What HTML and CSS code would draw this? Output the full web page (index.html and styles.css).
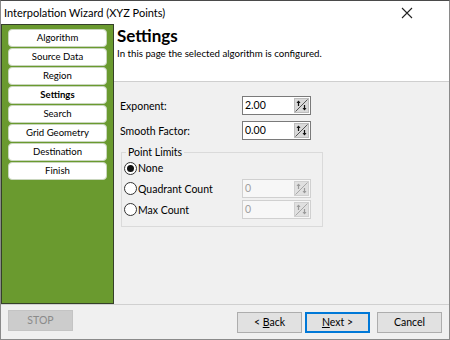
FILE: index.html
```html
<!DOCTYPE html>
<html>
<head>
<meta charset="utf-8">
<link rel="stylesheet" href="styles.css">
</head>
<body>
<div class="window">
  <div class="titlebar">
    <span class="title">Interpolation Wizard (XYZ Points)</span>
    <svg class="close" width="12" height="12" viewBox="0 0 12 12"><path d="M1 1 L11 11 M11 1 L1 11" stroke="#222" stroke-width="1.1"/></svg>
  </div>
  <div class="main">
    <div class="sidebar">
      <div class="navbtn">Algorithm</div>
      <div class="navbtn">Source Data</div>
      <div class="navbtn">Region</div>
      <div class="navbtn active">Settings</div>
      <div class="navbtn">Search</div>
      <div class="navbtn">Grid Geometry</div>
      <div class="navbtn">Destination</div>
      <div class="navbtn">Finish</div>
    </div>
    <div class="content">
      <div class="header">
        <div class="h-title">Settings</div>
        <div class="h-sub">In this page the selected algorithm is configured.</div>
      </div>
      <div class="body">
        <div class="row">
          <span class="lbl">Exponent:</span>
          <div class="spin"><span class="val">2.00</span><svg class="spinbtn" width="15" height="15" viewBox="0 0 15 15"><rect x="0.5" y="0.5" width="14" height="14" fill="#d9d9d9" stroke="#bdbdbd"/><path d="M1.5 13.5 L13.5 1.5" stroke="#555" stroke-width="1"/><path d="M4.5 3 V8" stroke="#111" stroke-width="1.2"/><path d="M2.5 5 L4.5 2.5 L6.5 5 Z" fill="#111"/><path d="M10.5 7 V12" stroke="#111" stroke-width="1.2"/><path d="M8.5 10 L10.5 12.5 L12.5 10 Z" fill="#111"/></svg></div>
        </div>
        <div class="row">
          <span class="lbl">Smooth Factor:</span>
          <div class="spin"><span class="val">0.00</span><svg class="spinbtn" width="15" height="15" viewBox="0 0 15 15"><rect x="0.5" y="0.5" width="14" height="14" fill="#d9d9d9" stroke="#bdbdbd"/><path d="M1.5 13.5 L13.5 1.5" stroke="#555" stroke-width="1"/><path d="M4.5 3 V8" stroke="#111" stroke-width="1.2"/><path d="M2.5 5 L4.5 2.5 L6.5 5 Z" fill="#111"/><path d="M10.5 7 V12" stroke="#111" stroke-width="1.2"/><path d="M8.5 10 L10.5 12.5 L12.5 10 Z" fill="#111"/></svg></div>
        </div>
        <fieldset class="group">
          <legend>Point Limits</legend>
          <div class="radiorow"><span class="radio checked"></span><span>None</span></div>
          <div class="radiorow r2">
            <div class="ropt"><span class="radio"></span><span>Quadrant Count</span></div>
            <div class="spin disabled"><span class="val">0</span><svg class="spinbtn" width="15" height="15" viewBox="0 0 15 15"><rect x="0.5" y="0.5" width="14" height="14" fill="#e0e0e0" stroke="#d0d0d0"/><path d="M1.5 13.5 L13.5 1.5" stroke="#a8a8a8" stroke-width="1"/><path d="M4.5 3 V8" stroke="#9a9a9a" stroke-width="1.2"/><path d="M2.5 5 L4.5 2.5 L6.5 5 Z" fill="#9a9a9a"/><path d="M10.5 7 V12" stroke="#9a9a9a" stroke-width="1.2"/><path d="M8.5 10 L10.5 12.5 L12.5 10 Z" fill="#9a9a9a"/></svg></div>
          </div>
          <div class="radiorow r2">
            <div class="ropt"><span class="radio"></span><span>Max Count</span></div>
            <div class="spin disabled"><span class="val">0</span><svg class="spinbtn" width="15" height="15" viewBox="0 0 15 15"><rect x="0.5" y="0.5" width="14" height="14" fill="#e0e0e0" stroke="#d0d0d0"/><path d="M1.5 13.5 L13.5 1.5" stroke="#a8a8a8" stroke-width="1"/><path d="M4.5 3 V8" stroke="#9a9a9a" stroke-width="1.2"/><path d="M2.5 5 L4.5 2.5 L6.5 5 Z" fill="#9a9a9a"/><path d="M10.5 7 V12" stroke="#9a9a9a" stroke-width="1.2"/><path d="M8.5 10 L10.5 12.5 L12.5 10 Z" fill="#9a9a9a"/></svg></div>
          </div>
        </fieldset>
      </div>
    </div>
  </div>
  <div class="footer">
    <div class="btn stop">STOP</div>
    <div class="spacer"></div>
    <div class="btn">&lt; <u>B</u>ack</div>
    <div class="btn default"><u>N</u>ext &gt;</div>
    <div class="btn cancel">Cancel</div>
  </div>
</div>
</body>
</html>
```

FILE: styles.css
```css
* { box-sizing: border-box; }
html, body { margin: 0; padding: 0; background: #fff; }
body { font-family: Lato, "Liberation Sans", sans-serif; font-size: 10.5px; color: #000; }

.window {
  width: 450px; height: 340px;
  border: 1px solid #8a8a8a;
  border-top-color: #4a4a4a;
  display: flex; flex-direction: column;
  background: #f0f0f0;
}
.titlebar {
  height: 23px; background: #fff;
  display: flex; align-items: center; justify-content: space-between;
  padding: 0 36px 0 3px;
}
.title { font-size: 11px; line-height: 16px; }
.close { display: block; }

.main { display: flex; height: 280px; }
.sidebar {
  width: 113px;
  background: #6a9a2f;
  border: 1px solid #35402a;
  padding: 4px 0 0 6px;
  display: flex; flex-direction: column; gap: 1px;
}
.navbtn {
  width: 99px; height: 18px;
  background: #fff;
  border: 1px solid #c9d6bd;
  border-radius: 4px;
  text-align: center;
  line-height: 16px;
  font-size: 9.6px;
}
.navbtn.active { font-weight: bold; }

.content { flex: 1; display: flex; flex-direction: column; }
.header {
  height: 58px; background: #fff;
  border-bottom: 1px solid #cfcfcf;
  padding: 1px 0 0 3px;
}
.h-title { font-size: 17px; font-weight: bold; line-height: 22px; }
.h-sub { font-size: 9.7px; line-height: 13px; }
.body { flex: 1; background: #f0f0f0; padding: 14px 0 0 6px; display: flex; flex-direction: column; }
.row { display: flex; align-items: center; height: 19px; margin-bottom: 6px; }
.lbl { width: 122px; }
.spin {
  width: 69px; height: 19px;
  background: #fff;
  border: 1px solid #7a7a7a;
  display: flex; align-items: center; justify-content: space-between;
  padding: 0 1px 0 2px;
}
.spin .val { line-height: 15px; }
.spinbtn { display: block; }
.spin.disabled { border-color: #d0d0d0; color: #a0a0a0; background: #f7f7f7; }

.group {
  margin: 0 0 0 1px; padding: 0 0 6px 2px;
  width: 202px;
  border: 1px solid #dadada;
  min-width: 0;
}
.group legend { padding: 0 2px; margin-left: 2px; line-height: 12px; }
.radiorow { display: flex; align-items: center; height: 20px; gap: 1px; }
.r2 { height: 21px; justify-content: space-between; padding-right: 11px; }
.ropt { display: flex; align-items: center; gap: 1px; }
.radio {
  width: 13px; height: 13px; border-radius: 50%;
  border: 1px solid #333; background: #fff;
  display: inline-flex; align-items: center; justify-content: center;
}
.radio.checked::after { content: ""; width: 7px; height: 7px; border-radius: 50%; background: #111; }

.footer {
  flex: 1;
  border-top: 1px solid #d0d0d0;
  display: flex; align-items: flex-start;
  padding: 5px 7px 0 7px;
}
.btn {
  width: 65px; height: 21px;
  border: 1px solid #adadad; background: #e1e1e1;
  text-align: center; line-height: 19px; font-size: 10.5px;
  margin-top: 2px;
}
.btn.stop { margin-top: 0; background: #cccccc; border-color: #c4c4c4; color: #8a8a8a; }
.btn.default { border: 2px solid #0078d7; line-height: 17px; margin-left: 3px; }
.btn.cancel { margin-left: 7px; }
.spacer { flex: 1; }
```
